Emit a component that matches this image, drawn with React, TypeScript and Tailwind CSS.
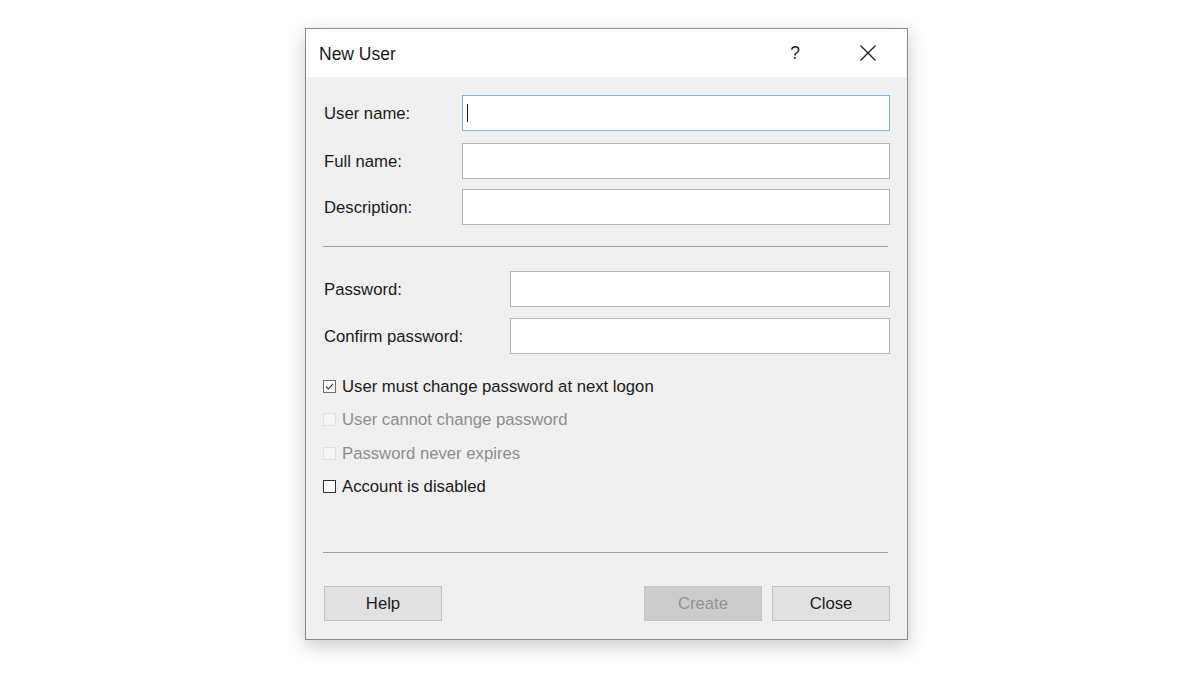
import React from 'react';

function TextBox({ width, focused }: { width: string; focused?: boolean }) {
  return (
    <div
      className={`${width} h-[36px] bg-white border flex items-center pl-[4px] ${
        focused ? 'border-[#7eb4ea]' : 'border-[#b4b4b4]'
      }`}
    >
      {focused && <div className="w-px h-[18px] bg-[#1a1a1a]" />}
    </div>
  );
}

function Check({ label, checked, disabled }: { label: string; checked?: boolean; disabled?: boolean }) {
  return (
    <div className="flex items-center h-[20px]">
      <div
        className={`w-[13px] h-[13px] border flex items-center justify-center ${
          disabled ? 'border-[#e0e0e0] bg-[#f4f4f4]' : checked ? 'border-[#6e6e6e] bg-white' : 'border-[#333333] bg-white'
        }`}
      >
        {checked && (
          <svg width="9" height="9" viewBox="0 0 9 9">
            <path d="M1 4.6 L3.4 7 L8 1.8" fill="none" stroke="#333" strokeWidth="1.1" />
          </svg>
        )}
      </div>
      <span className={`ml-[6px] pt-px ${disabled ? 'text-[#8c8c8c]' : 'text-[#1a1a1a]'}`}>{label}</span>
    </div>
  );
}

function Btn({ label, disabled }: { label: string; disabled?: boolean }) {
  return (
    <div
      className={`w-[118px] h-[35px] border flex items-center justify-center pt-px ${
        disabled ? 'bg-[#cccccc] border-[#c4c4c4] text-[#929292]' : 'bg-[#e1e1e1] border-[#c2c2c2] text-[#1a1a1a]'
      }`}
    >
      {label}
    </div>
  );
}

export default function App() {
  return (
    <div
      className="w-[1200px] h-[675px] bg-white pt-[28px] pl-[305px]"
      style={{ fontFamily: '"Liberation Sans", Arial, sans-serif' }}
    >
      <div className="w-[603px] h-[612px] border border-[#8a8a8a] bg-[#f0f0f0] shadow-[0_6px_18px_rgba(0,0,0,0.22)] flex flex-col text-[16.7px]">
        {/* title bar */}
        <div className="h-[48px] bg-white flex items-center pl-[13px] text-[17.5px] text-[#1a1a1a]">
          <span className="flex-1 pt-[2px]">New User</span>
          <span className="w-[20px] text-center mr-[54px]">?</span>
          <svg width="18" height="18" viewBox="0 0 18 18" className="mr-[30px]">
            <path d="M1.5 1.5 L16.5 16.5 M16.5 1.5 L1.5 16.5" stroke="#1a1a1a" strokeWidth="1.3" />
          </svg>
        </div>

        <div className="flex flex-col pl-[18px] pr-[16px] text-[#1a1a1a]">
          <div className="flex items-center mt-[18px]">
            <span className="w-[138px] pt-[2px]">User name:</span>
            <TextBox width="w-[428px]" focused />
          </div>
          <div className="flex items-center mt-[12px]">
            <span className="w-[138px] pt-[2px]">Full name:</span>
            <TextBox width="w-[428px]" />
          </div>
          <div className="flex items-center mt-[10px]">
            <span className="w-[138px] pt-[2px]">Description:</span>
            <TextBox width="w-[428px]" />
          </div>

          <div className="mt-[21px] h-px bg-[#a0a0a0] w-[565px] -ml-px" />

          <div className="flex items-center mt-[24px]">
            <span className="w-[186px] pt-[2px]">Password:</span>
            <TextBox width="w-[380px]" />
          </div>
          <div className="flex items-center mt-[11px]">
            <span className="w-[186px] pt-[2px]">Confirm password:</span>
            <TextBox width="w-[380px]" />
          </div>

          <div className="flex flex-col gap-[13.5px] mt-[22px] -ml-px">
            <Check label="User must change password at next logon" checked />
            <Check label="User cannot change password" disabled />
            <Check label="Password never expires" disabled />
            <Check label="Account is disabled" />
          </div>

          <div className="mt-[55px] h-px bg-[#a0a0a0] w-[565px] -ml-px" />

          <div className="flex items-center mt-[33px] pr-px">
            <Btn label="Help" />
            <div className="flex-1" />
            <Btn label="Create" disabled />
            <div className="w-[10px]" />
            <Btn label="Close" />
          </div>
        </div>
      </div>
    </div>
  );
}
